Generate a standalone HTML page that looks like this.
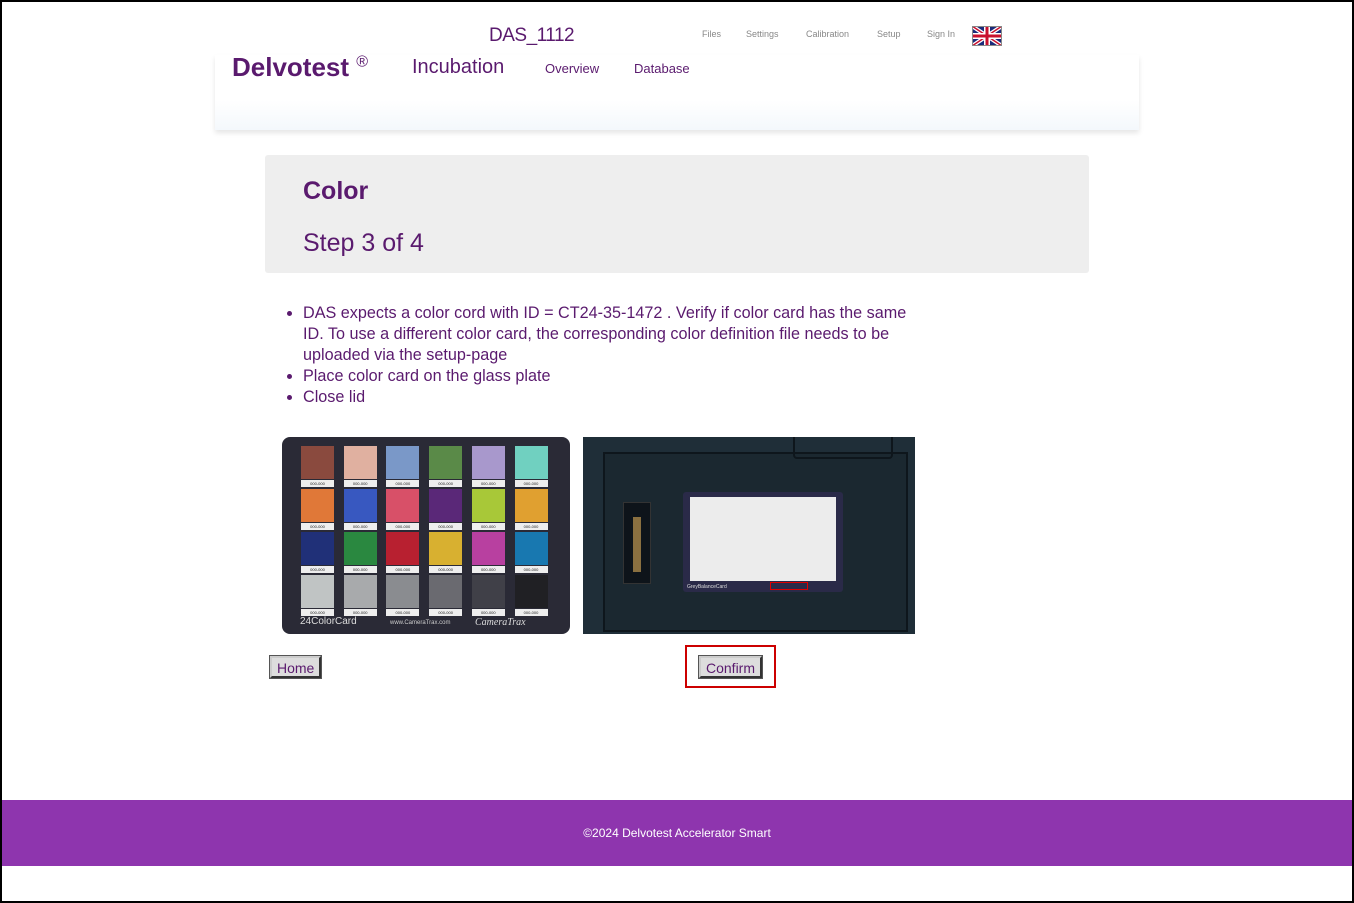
<!DOCTYPE html>
<html><head><style>
*{box-sizing:border-box;margin:0;padding:0}
body{width:1354px;height:903px;background:#fff;font-family:"Liberation Sans",sans-serif;position:relative;overflow:hidden}
.a{position:absolute}
.p{color:#5a1a6e}
.nav{font-size:9px;color:#888}
.btn{position:absolute;background:#ddd;border:2px solid;border-color:#ccc #333 #333 #ccc;outline:1px solid #555;font-size:14px;color:#5a1a6e;padding:1px 5px;height:22px;line-height:18px}
.pt{position:absolute;width:33px;height:33px}
.lb{position:absolute;width:33px;height:7px;background:#eee;font-size:4px;color:#222;text-align:center;line-height:7px}
</style></head><body>
<div class="a" style="left:215px;top:55px;width:924px;height:75px;box-shadow:0 3px 5px rgba(0,0,0,0.1);background:linear-gradient(180deg,#fff 60%,#f4f8fc)"></div>
<div class="a p" style="left:489px;top:25px;font-size:19px;letter-spacing:-0.5px">DAS_1112</div>
<div class="a nav" style="left:702px;top:29px">Files</div>
<div class="a nav" style="left:746px;top:29px">Settings</div>
<div class="a nav" style="left:806px;top:29px">Calibration</div>
<div class="a nav" style="left:877px;top:29px">Setup</div>
<div class="a nav" style="left:927px;top:29px">Sign In</div>
<svg class="a" style="left:972px;top:26px" width="30" height="20" viewBox="0 0 30 20"><rect width="30" height="20" fill="#1a2a7a"/><path d="M0 0L30 20M30 0L0 20" stroke="#fff" stroke-width="4"/><path d="M0 0L30 20M30 0L0 20" stroke="#c8102e" stroke-width="1.5"/><path d="M15 0V20M0 10H30" stroke="#fff" stroke-width="6"/><path d="M15 0V20M0 10H30" stroke="#c8102e" stroke-width="3"/><rect x=".5" y=".5" width="29" height="19" fill="none" stroke="#888"/></svg>
<div class="a p" style="left:232px;top:52px;font-size:26px;font-weight:bold">Delvotest <sup style="font-size:16px;font-weight:normal">®</sup></div>
<div class="a p" style="left:412px;top:56px;font-size:20px">Incubation</div>
<div class="a p" style="left:545px;top:61px;font-size:13px">Overview</div>
<div class="a p" style="left:634px;top:61px;font-size:13px">Database</div>
<div class="a" style="left:265px;top:155px;width:824px;height:118px;background:#eee;border-radius:3px"></div>
<div class="a p" style="left:303px;top:177px;font-size:25px;font-weight:bold">Color</div>
<div class="a p" style="left:303px;top:229px;font-size:25px">Step 3 of 4</div>
<div class="a p" style="left:288px;top:303px;width:660px;font-size:16.2px;line-height:21px">
<ul style="padding-left:15px"><li>DAS expects a color cord with ID = CT24-35-1472 . Verify if color card has the same<br>ID. To use a different color card, the corresponding color definition file needs to be<br>uploaded via the setup-page</li><li>Place color card on the glass plate</li><li>Close lid</li></ul></div>
<div class="a" style="left:282px;top:437px;width:288px;height:197px;background:#2a2a36;border-radius:8px;overflow:hidden">
<div id="cc"></div>
<div class="a" style="left:18px;top:179px;color:#ddd;font-size:10px">24ColorCard</div>
<div class="a" style="left:108px;top:183px;color:#ccc;font-size:6px">www.CameraTrax.com</div>
<div class="a" style="left:193px;top:180px;color:#ddd;font-size:10px;font-family:'Liberation Serif',serif;font-style:italic">CameraTrax</div>
</div>
<div class="a" style="left:583px;top:437px;width:332px;height:197px;background:#1f2e38;overflow:hidden">
<div class="a" style="left:20px;top:15px;width:305px;height:180px;border:2px solid #0e161c;background:#1b2830"></div>
<div class="a" style="left:210px;top:0;width:100px;height:22px;border:2px solid #0e161c;border-top:0;border-radius:0 0 4px 4px"></div>
<div class="a" style="left:40px;top:65px;width:28px;height:82px;background:#0e141a;border:1px solid #333"></div>
<div class="a" style="left:50px;top:80px;width:8px;height:55px;background:#8a7040"></div>
<div class="a" style="left:100px;top:55px;width:160px;height:100px;background:#2a2a48;border-radius:3px"></div>
<div class="a" style="left:107px;top:60px;width:146px;height:84px;background:#ececec"></div>
<div class="a" style="left:104px;top:147px;color:#ddd;font-size:5px">GreyBalanceCard</div>
<div class="a" style="left:187px;top:145px;width:38px;height:8px;border:1.5px solid #d00"></div>
</div>
<div class="btn" style="left:270px;top:656px">Home</div>
<div class="a" style="left:685px;top:645px;width:91px;height:43px;border:2px solid #c00"></div>
<div class="btn" style="left:699px;top:656px">Confirm</div>
<div class="a" style="left:0;top:800px;width:1354px;height:66px;background:#8e35ae;color:#fff;font-size:12px;text-align:center;line-height:66px">©2024 Delvotest Accelerator Smart</div>
<div class="a" style="left:0;top:0;width:1354px;height:903px;border:2px solid #000"></div>
<script>
var c=[["#8a4a3e","#e0b0a0","#7a98c8","#5a8a48","#a898cc","#70d0c0"],["#e07838","#3858c0","#d85068","#5a2878","#a8c838","#e0a030"],["#203078","#2a8840","#b82030","#d8b030","#b840a0","#1878b0"],["#c0c4c4","#a8aaac","#8a8c90","#6a6a70","#404048","#202024"]];
var h="";for(var r=0;r<4;r++)for(var k=0;k<6;k++){var x=19+k*42.7,y=9+r*43;h+='<div class="pt" style="left:'+x+'px;top:'+y+'px;background:'+c[r][k]+'"></div><div class="lb" style="left:'+x+'px;top:'+(y+34)+'px">000-000</div>';}
document.getElementById("cc").innerHTML=h;
</script>
</body></html>
